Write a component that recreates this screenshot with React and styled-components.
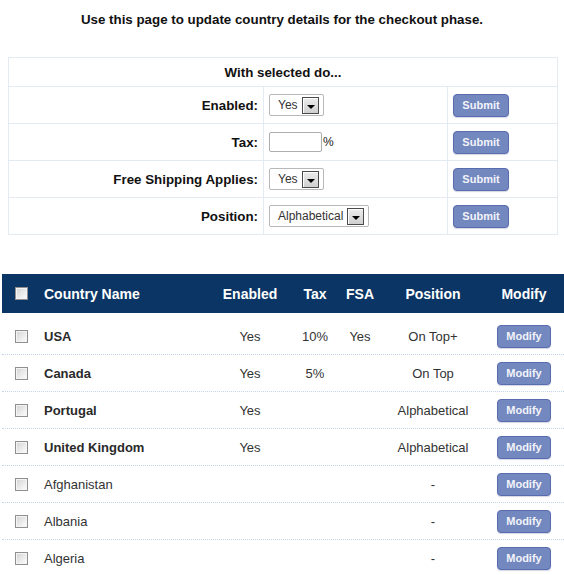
import React from "react";
import styled, { createGlobalStyle } from "styled-components";

const Global = createGlobalStyle`
  html { overflow: hidden; scrollbar-width: none; }
  html::-webkit-scrollbar, body::-webkit-scrollbar { display: none; width: 0; height: 0; }
  body {
    margin: 0;
    font-family: "Liberation Sans", Arial, sans-serif;
    color: #333;
    background: #fff;
  }
  * { box-sizing: border-box; }
`;

const Page = styled.div`
  width: 564px;
  padding: 8px 8px 0 8px;
`;

const Title = styled.p`
  margin: 0;
  padding-top: 4px;
  text-align: center;
  font-weight: bold;
  font-size: 13.33px;
  line-height: 15px;
  color: #111;
`;

const BulkGrid = styled.div`
  margin-top: 30px;
  width: 550px;
  display: grid;
  grid-template-columns: 255px 184px 110px;
  border-top: 1px solid #e4eaf2;
  border-left: 1px solid #e4eaf2;
`;

const BulkHead = styled.div`
  grid-column: 1 / -1;
  height: 29px;
  border-right: 1px solid #e4eaf2;
  border-bottom: 1px solid #e4eaf2;
  display: flex;
  align-items: center;
  justify-content: center;
  font-weight: bold;
  font-size: 13.33px;
  color: #111;
`;

const Cell = styled.div`
  height: 37px;
  border-right: 1px solid #e4eaf2;
  border-bottom: 1px solid #e4eaf2;
  display: flex;
  align-items: center;
  justify-content: ${(p) => (p.$right ? "flex-end" : "flex-start")};
  padding: ${(p) => (p.$right ? "0 5px 0 0" : "0 0 0 5px")};
  font-size: 13.33px;
  font-weight: ${(p) => (p.$bold ? "bold" : "normal")};
  color: ${(p) => (p.$bold ? "#111" : "#333")};
`;

const SelectBox = styled.div`
  height: 22px;
  display: inline-flex;
  align-items: center;
  gap: 4px;
  padding: 0 4px 0 8px;
  border: 1px solid #b8b8b8;
  border-radius: 2px;
  background: #fff;
  font-size: 12px;
  color: #333;
`;

const ArrowBox = styled.span`
  position: relative;
  width: 17px;
  height: 17px;
  border: 1px solid #4a4a4a;
  background: linear-gradient(180deg, #ececec, #cfcfcf);
  box-shadow: inset 1px 1px 0 #fff;
  &::after {
    content: "";
    position: absolute;
    left: 4px;
    top: 7px;
    border-left: 4px solid transparent;
    border-right: 4px solid transparent;
    border-top: 4px solid #000;
  }
`;

const TextInput = styled.input`
  width: 53px;
  height: 20px;
  border: 1px solid #adadad;
  border-radius: 2px;
  padding: 0 3px;
  font-family: inherit;
  font-size: 12px;
`;

const Percent = styled.span`
  font-size: 12px;
  color: #222;
  margin-left: 1px;
`;

const ActionButton = styled.button`
  height: 23px;
  width: ${(p) => p.$w}px;
  padding: 0;
  border: 1px solid #5a6cb0;
  border-radius: 4px;
  background: #7388bf;
  color: #f2f3fa;
  font-family: inherit;
  font-weight: bold;
  font-size: 11px;
  box-shadow: 0 1px 1px rgba(80, 90, 140, 0.25);
  cursor: pointer;
`;

const CountryTable = styled.div`
  margin: 39px 0 0 -6px;
  width: 562px;
`;

const COLS = "42px 174px 64px 66px 24px 122px 60px 10px";

const HeadRow = styled.div`
  display: grid;
  grid-template-columns: ${COLS};
  height: 39px;
  background: #0a3565;
  color: #fff;
  font-weight: bold;
  font-size: 14px;
  margin-bottom: 5px;
`;

const BodyRow = styled.div`
  display: grid;
  grid-template-columns: ${COLS};
  height: 37px;
  border-bottom: 1px dotted #c3d3ea;
  font-size: 13px;
  color: #333;
`;

const Col = styled.div`
  display: flex;
  align-items: center;
  justify-content: ${(p) => (p.$start ? "flex-start" : "center")};
  padding-left: ${(p) => (p.$pad ? p.$pad : 0)}px;
  font-weight: ${(p) => (p.$bold ? "bold" : "inherit")};
  color: ${(p) => (p.$bold ? "#2a2a2a" : "inherit")};
  white-space: nowrap;
`;

const Check = styled.input.attrs({ type: "checkbox" })`
  appearance: none;
  margin: 0;
  width: 13px;
  height: 13px;
  border: 1px solid #8f8f8f;
  background: linear-gradient(135deg, #d2d2d2 0%, #ededed 60%, #fff 100%);
  box-shadow: inset 0 0 0 1px #f4f4f4;
`;

const bulk = [
  { label: "Enabled:", control: "select", value: "Yes" },
  { label: "Tax:", control: "input" },
  { label: "Free Shipping Applies:", control: "select", value: "Yes" },
  { label: "Position:", control: "select", value: "Alphabetical" },
];

const countries = [
  { name: "USA", bold: true, enabled: "Yes", tax: "10%", fsa: "Yes", pos: "On Top+" },
  { name: "Canada", bold: true, enabled: "Yes", tax: "5%", fsa: "", pos: "On Top" },
  { name: "Portugal", bold: true, enabled: "Yes", tax: "", fsa: "", pos: "Alphabetical" },
  { name: "United Kingdom", bold: true, enabled: "Yes", tax: "", fsa: "", pos: "Alphabetical" },
  { name: "Afghanistan", enabled: "", tax: "", fsa: "", pos: "-" },
  { name: "Albania", enabled: "", tax: "", fsa: "", pos: "-" },
  { name: "Algeria", enabled: "", tax: "", fsa: "", pos: "-" },
];

export default function App() {
  return (
    <Page>
      <Global />
      <Title>Use this page to update country details for the checkout phase.</Title>

      <BulkGrid>
        <BulkHead>With selected do...</BulkHead>
        {bulk.map((b) => (
          <React.Fragment key={b.label}>
            <Cell $right $bold>{b.label}</Cell>
            <Cell>
              {b.control === "select" ? (
                <SelectBox>
                  <span>{b.value}</span>
                  <ArrowBox />
                </SelectBox>
              ) : (
                <>
                  <TextInput type="text" />
                  <Percent>%</Percent>
                </>
              )}
            </Cell>
            <Cell>
              <ActionButton $w={56}>Submit</ActionButton>
            </Cell>
          </React.Fragment>
        ))}
      </BulkGrid>

      <CountryTable>
        <HeadRow>
          <Col $start $pad={13}><Check /></Col>
          <Col $start>Country Name</Col>
          <Col>Enabled</Col>
          <Col>Tax</Col>
          <Col>FSA</Col>
          <Col>Position</Col>
          <Col>Modify</Col>
          <Col />
        </HeadRow>
        {countries.map((c) => (
          <BodyRow key={c.name}>
            <Col $start $pad={13}><Check /></Col>
            <Col $start $bold={c.bold}>{c.name}</Col>
            <Col>{c.enabled}</Col>
            <Col>{c.tax}</Col>
            <Col>{c.fsa}</Col>
            <Col>{c.pos}</Col>
            <Col><ActionButton $w={54}>Modify</ActionButton></Col>
            <Col />
          </BodyRow>
        ))}
      </CountryTable>
    </Page>
  );
}
